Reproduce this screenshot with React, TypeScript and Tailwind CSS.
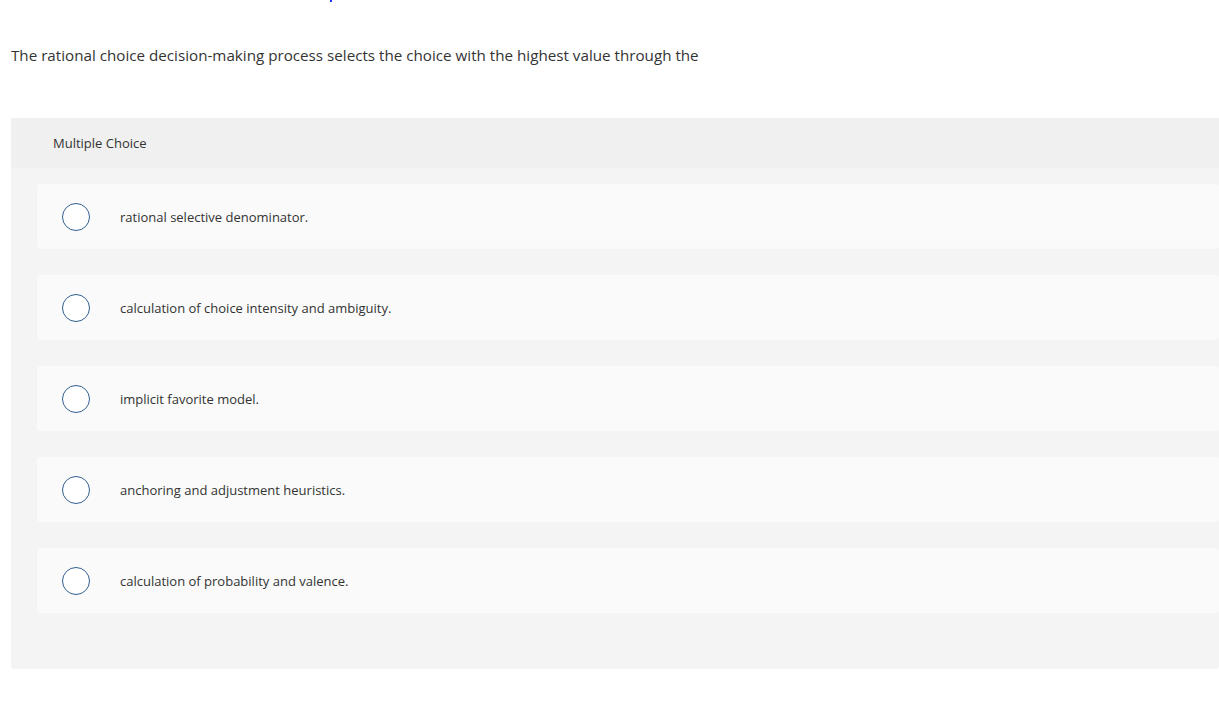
const OPTIONS = [
  'rational selective denominator.',
  'calculation of choice intensity and ambiguity.',
  'implicit favorite model.',
  'anchoring and adjustment heuristics.',
  'calculation of probability and valence.',
]

function Option({ label }: { label: string }) {
  return (
    <div className="ml-[26px] flex h-[65px] items-center rounded-[3px] bg-[#fafafa]">
      <span className="ml-[25px] h-[28px] w-[28px] shrink-0 rounded-full border-[1.5px] border-[#2f5f8f] bg-white" />
      <span className="ml-[30px] pt-[2px] text-[13px] text-[#333]">{label}</span>
    </div>
  )
}

export default function App() {
  return (
    <div className="min-h-[714px] bg-white font-['Open_Sans','Lato',sans-serif] text-[#333]">
      <div className="flex h-[2px] pl-[330px]">
        <span className="h-[2px] w-[2px] bg-[#2233ff]" />
      </div>
      <p className="ml-[11px] mt-[43px] text-[15.2px] leading-[20px]">
        The rational choice decision-making process selects the choice with the highest value through the
      </p>
      <div className="ml-[11px] mt-[53px] rounded-b-[4px] bg-[#f4f4f4] pb-[56px]">
        <div className="flex h-[50px] items-center bg-[#f0f0f0] pl-[42px] pt-[2px] text-[13px]">Multiple Choice</div>
        <div className="flex flex-col gap-[26px] pt-[16px]">
          {OPTIONS.map((o) => (
            <Option key={o} label={o} />
          ))}
        </div>
      </div>
    </div>
  )
}
